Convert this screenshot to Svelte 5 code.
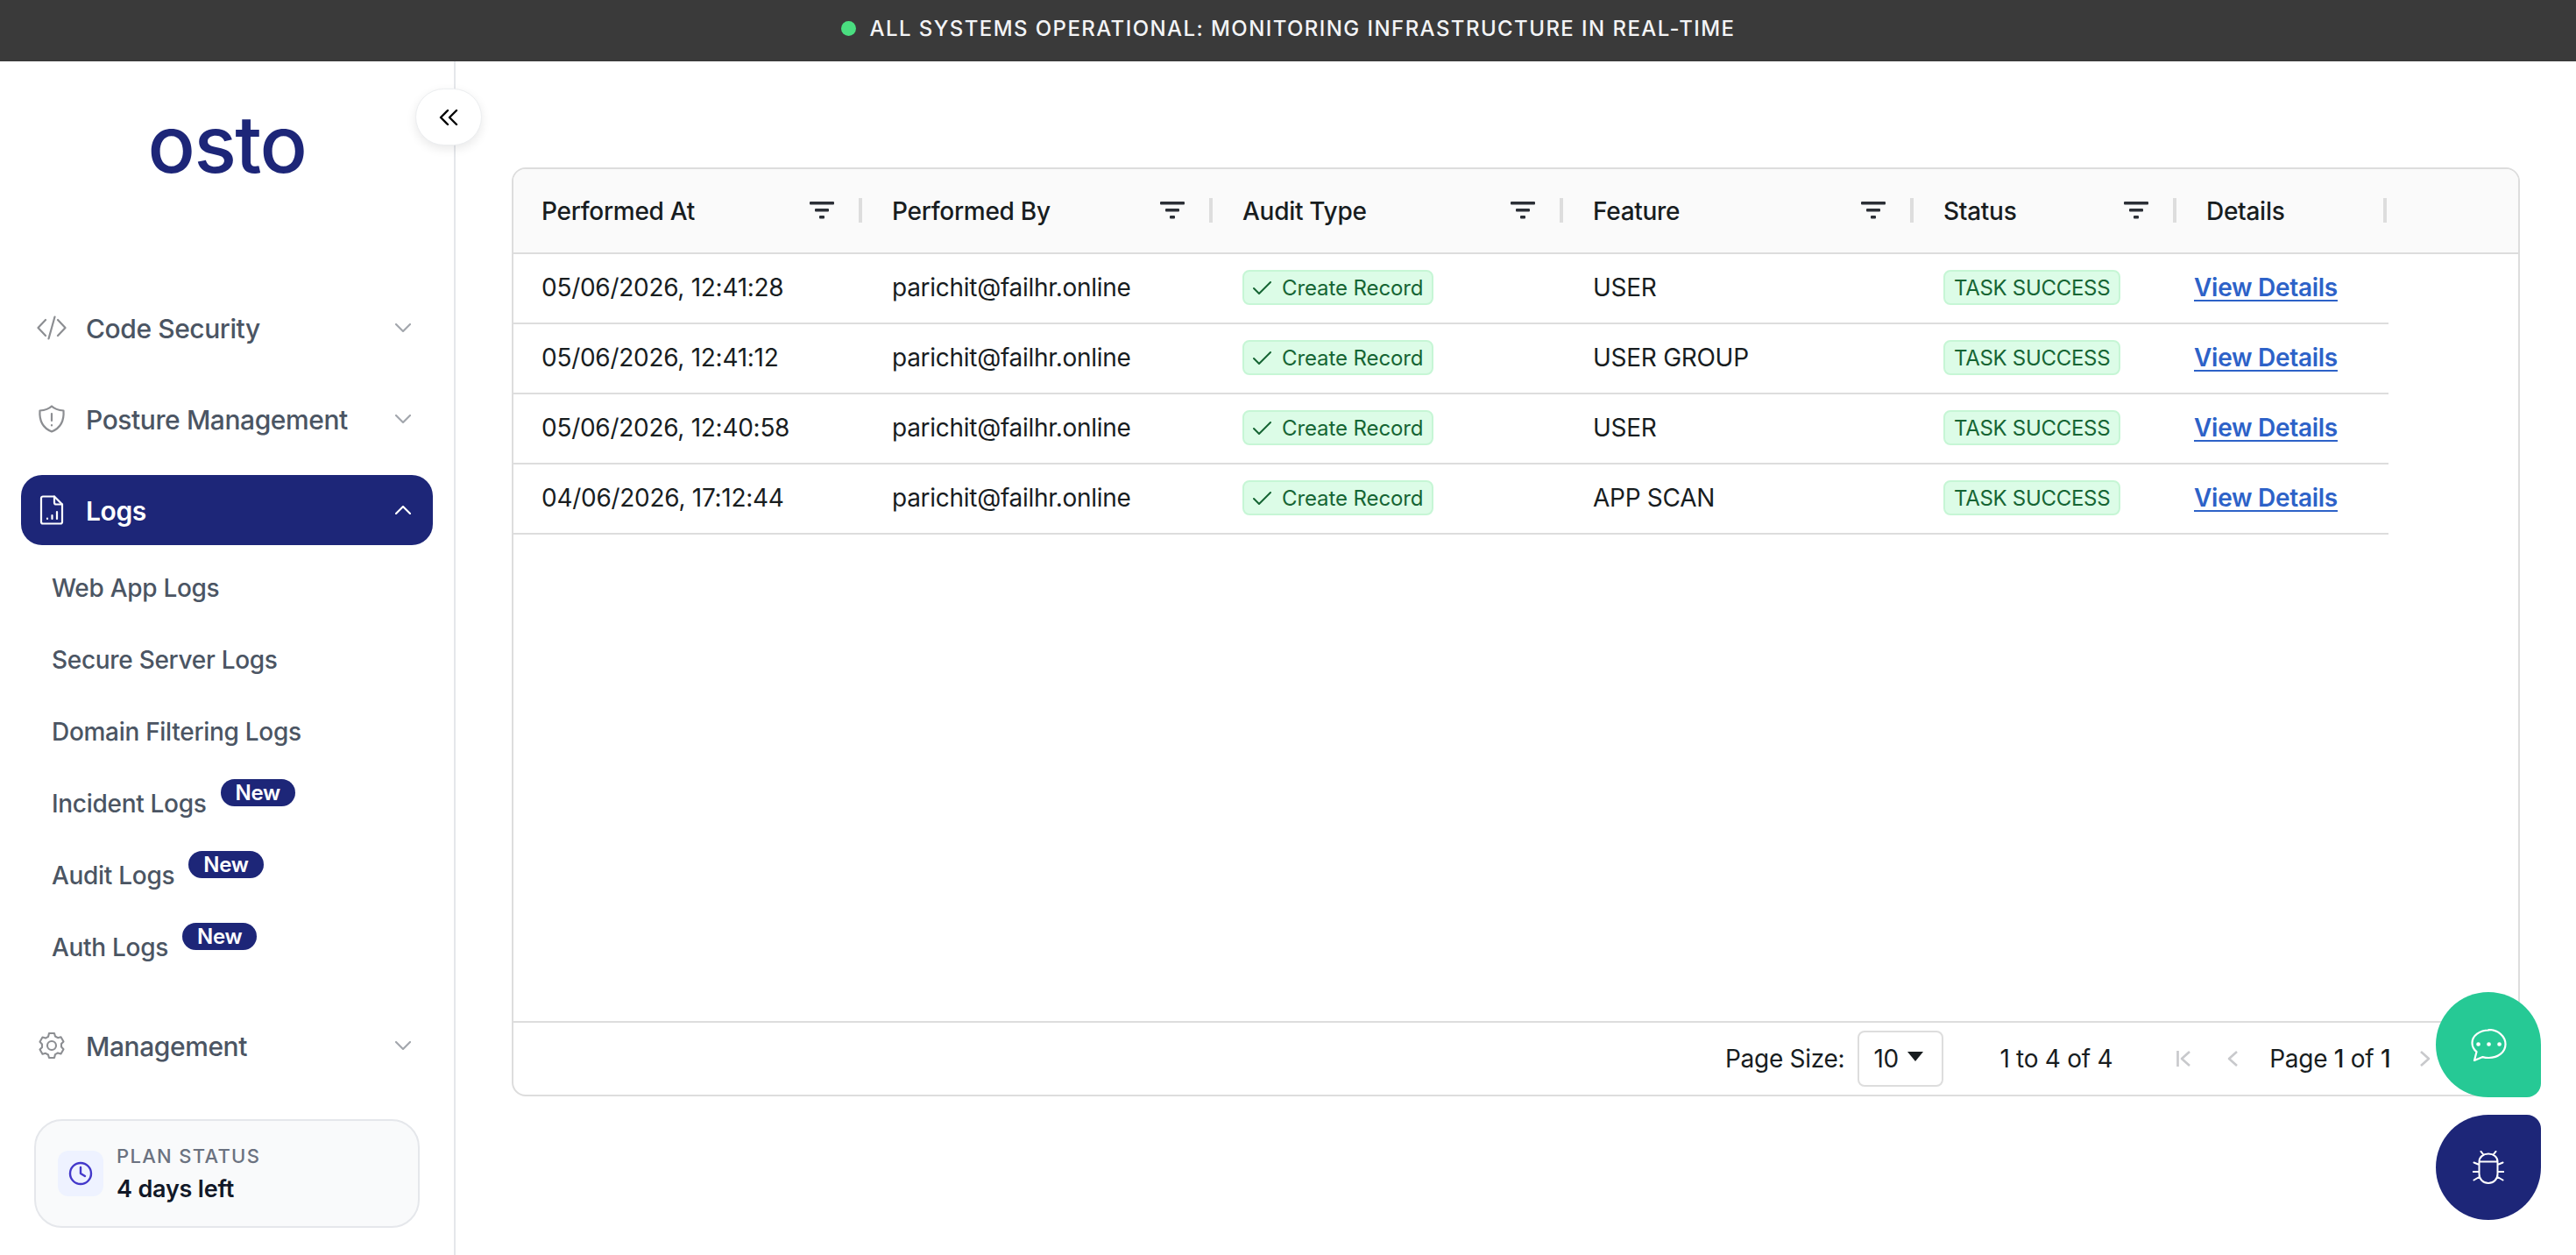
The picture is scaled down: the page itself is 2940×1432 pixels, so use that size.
<script>
  const cols = [
    { label: 'Performed At', w: 400, filter: true },
    { label: 'Performed By', w: 400, filter: true },
    { label: 'Audit Type', w: 400, filter: true },
    { label: 'Feature', w: 400, filter: true },
    { label: 'Status', w: 300, filter: true },
    { label: 'Details', w: 240, filter: false }
  ];
  const rows = [
    { at: '05/06/2026, 12:41:28', feature: 'USER' },
    { at: '05/06/2026, 12:41:12', feature: 'USER GROUP' },
    { at: '05/06/2026, 12:40:58', feature: 'USER' },
    { at: '04/06/2026, 17:12:44', feature: 'APP SCAN' }
  ];
  const subs = [
    { label: 'Web App Logs' },
    { label: 'Secure Server Logs' },
    { label: 'Domain Filtering Logs' },
    { label: 'Incident Logs', isNew: true },
    { label: 'Audit Logs', isNew: true },
    { label: 'Auth Logs', isNew: true }
  ];
</script>

<div class="page">
  <header class="topbar">
    <span class="dot"></span>
    <span class="toptext">ALL SYSTEMS OPERATIONAL: MONITORING INFRASTRUCTURE IN REAL-TIME</span>
  </header>

  <div class="body">
    <aside class="sidebar">
      <button class="collapse" aria-label="Collapse">
        <svg viewBox="0 0 24 24" width="24" height="24" fill="none" stroke="#000" stroke-width="2.400" stroke-linecap="round" stroke-linejoin="round"><path d="M11 4 3 12l8 8M21 4l-8 8 8 8"/></svg>
      </button>
      <div class="logo">osto</div>

      <nav class="nav">
        <div class="item">
          <svg class="ic" viewBox="0 0 34 34" fill="none" stroke="#8c8e92" stroke-width="2.200" stroke-linecap="round" stroke-linejoin="round"><path d="M10 8 1.500 17l8.500 9M24 8l8.500 9-8.500 9M20.500 4.500l-7 25"/></svg>
          <span>Code Security</span>
          <svg class="chev" viewBox="0 0 18 10" fill="none" stroke="#a3a7ad" stroke-width="2.200" stroke-linecap="round" stroke-linejoin="round"><path d="M1 1l8 8 8-8"/></svg>
        </div>
        <div class="item">
          <svg class="ic" viewBox="0 0 34 34" fill="none" stroke="#8c8e92" stroke-width="2.200" stroke-linecap="round" stroke-linejoin="round"><path d="M17 2.500c2.500 2.500 7 4.500 13.500 5 .8 11-2.500 19.500-13.500 24C6 27 2.700 18.500 3.500 7.500c6.500-.5 11-2.500 13.500-5Z"/><path d="M17 11v8M17 24v.5"/></svg>
          <span>Posture Management</span>
          <svg class="chev" viewBox="0 0 18 10" fill="none" stroke="#a3a7ad" stroke-width="2.200" stroke-linecap="round" stroke-linejoin="round"><path d="M1 1l8 8 8-8"/></svg>
        </div>
        <div class="item active">
          <svg class="ic" viewBox="0 0 34 34" fill="none" stroke="#fff" stroke-width="2.200" stroke-linecap="round" stroke-linejoin="round"><path d="M20 1.500H7a2 2 0 0 0-2 2v27a2 2 0 0 0 2 2h20a2 2 0 0 0 2-2V10.500Z"/><path d="M20 1.500v7a2 2 0 0 0 2 2h7M12 27v-.5M17.500 27v-4M23 27v-8"/></svg>
          <span>Logs</span>
          <svg class="chev" viewBox="0 0 18 10" fill="none" stroke="#fff" stroke-width="2.200" stroke-linecap="round" stroke-linejoin="round"><path d="M1 9l8-8 8 8"/></svg>
        </div>

        <ul class="subs">
          {#each subs as s}
            <li>
              <span class="sublabel">{s.label}</span>
              {#if s.isNew}<span class="new">New</span>{/if}
            </li>
          {/each}
        </ul>

        <div class="item mgmt">
          <svg class="ic" viewBox="0 0 34 34" fill="none" stroke="#8c8e92" stroke-width="2.100" stroke-linecap="round" stroke-linejoin="round"><path d="M14 3h6l1 3.500 3 1.700 3.500-1 3 5.200-2.500 2.600v3.600l2.500 2.600-3 5.200-3.500-1-3 1.700L20 31h-6l-1-3.500-3-1.700-3.500 1-3-5.200L6 19v-3.600L3.500 12.800l3-5.200 3.500 1 3-1.700Z"/><circle cx="17" cy="17" r="5"/></svg>
          <span>Management</span>
          <svg class="chev" viewBox="0 0 18 10" fill="none" stroke="#a3a7ad" stroke-width="2.200" stroke-linecap="round" stroke-linejoin="round"><path d="M1 1l8 8 8-8"/></svg>
        </div>
      </nav>

      <div class="plan">
        <div class="planicon">
          <svg viewBox="0 0 28 28" width="28" height="28" fill="none" stroke="#4338ca" stroke-width="2.400" stroke-linecap="round" stroke-linejoin="round"><circle cx="14" cy="14" r="12"/><path d="M14 7v7l5 3"/></svg>
        </div>
        <div>
          <div class="plantop">PLAN STATUS</div>
          <div class="planval">4 days left</div>
        </div>
      </div>
    </aside>

    <main class="main">
      <section class="grid">
        <div class="head">
          {#each cols as c}
            <div class="hcell" style="width:{c.w}px">
              <span>{c.label}</span>
              {#if c.filter}
                <svg class="filter" viewBox="0 0 28 20" fill="#2b2f36"><rect x="0" y="0" width="28" height="3.500" rx="1"/><rect x="6" y="8" width="16" height="3.500" rx="1"/><rect x="11" y="16" width="6" height="3.500" rx="1"/></svg>
              {/if}
              <i class="handle"></i>
            </div>
          {/each}
        </div>

        <div class="rows">
          {#each rows as r}
            <div class="row">
              <div class="cell" style="width:400px">{r.at}</div>
              <div class="cell" style="width:400px">parichit@failhr.online</div>
              <div class="cell" style="width:400px">
                <span class="badge">
                  <svg viewBox="0 0 21 15" width="21" height="15" fill="none" stroke="#166534" stroke-width="2" stroke-linecap="round" stroke-linejoin="round"><path d="M1 8l6 6L20 1"/></svg>
                  Create Record
                </span>
              </div>
              <div class="cell" style="width:400px">{r.feature}</div>
              <div class="cell" style="width:300px"><span class="badge task">TASK SUCCESS</span></div>
              <div class="cell link" style="width:240px"><a href="#top">View Details</a></div>
            </div>
          {/each}
        </div>

        <footer class="pager">
          <span>Page Size:</span>
          <div class="select"><span>10</span><i class="tri"></i></div>
          <span class="count">1 to 4 of 4</span>
          <svg class="pg first" viewBox="0 0 16 18" fill="none" stroke="#c8c9cc" stroke-width="2.600" stroke-linejoin="round"><path d="M1.500 0v18M15 1 6 9l9 8"/></svg>
          <svg class="pg prev" viewBox="0 0 12 18" fill="none" stroke="#c8c9cc" stroke-width="2.600" stroke-linejoin="round"><path d="M11 1 2 9l9 8"/></svg>
          <span class="pagetext">Page <b>1</b> of <b>1</b></span>
          <svg class="pg next" viewBox="0 0 12 18" fill="none" stroke="#c8c9cc" stroke-width="2.600" stroke-linejoin="round"><path d="M1 1l9 8-9 8"/></svg>
        </footer>
      </section>
    </main>
  </div>

  <button class="fab chat" aria-label="Chat">
    <svg viewBox="0 0 41 37" width="41" height="37" fill="none" stroke="#fff" stroke-width="2.200" stroke-linecap="round" stroke-linejoin="round"><path d="M20.500 1.500C10 1.500 1.500 7.700 1.500 16c0 4.200 2 7.600 5 10.200L4 36l9.500-3.900c2.200.6 4.500.9 7 .9 10.500 0 19-6.500 19-15.500s-8.500-16.500-19-16.500Z"/><path d="M8.500 17.500h.1M20.500 17.500h.1M32.500 17.500h.1" stroke-width="4.600"/></svg>
  </button>
  <button class="fab bug" aria-label="Report a bug">
    <svg viewBox="0 0 36 38" width="36" height="38" fill="none" stroke="#fff" stroke-width="2" stroke-linecap="round" stroke-linejoin="round"><path d="M7.500 12.500C7.500 7.500 12 3.500 18 3.500s10.500 4 10.500 8.900ZM7.500 12.500v14c0 6 4.500 10.500 10.500 10.500s10.500-4.500 10.500-10.500v-14M12 4 9.500.8M24 4 26.500.8M7.500 16 1.500 13.500M28.500 16l6-2.500M7.500 24H.8M28.500 24h6.700M7.500 30l-6 3.500M28.500 30l6 3.500"/></svg>
  </button>
</div>

<style>
  :global(body) { margin: 0; background: #fff; }
  .page {
    position: relative;
    height: 1432px;
    overflow: hidden;
    display: flex;
    flex-direction: column;
    font-family: Inter, "Liberation Sans", sans-serif;
    font-size: 28px;
    letter-spacing: -0.28px;
    color: #181d1f;
  }
  .topbar {
    height: 70px;
    padding-bottom: 6px;
    box-sizing: border-box;
    flex: none;
    background: #3a3a3a;
    display: flex;
    align-items: center;
    justify-content: center;
    gap: 16px;
  }
  .dot { width: 17px; height: 17px; border-radius: 50%; background: #4ade80; }
  .toptext { color: #f3f4f6; font-size: 24px; font-weight: 500; letter-spacing: 1.420px; }

  .body { flex: 1; display: flex; min-height: 0; }
  .sidebar {
    position: relative;
    width: 520px;
    box-sizing: border-box;
    flex: none;
    border-right: 2px solid #e5e7eb;
    display: flex;
    flex-direction: column;
    padding: 0 24px;
  }
  .collapse {
    position: absolute;
    left: 474px;
    top: 31px;
    width: 76px;
    height: 65px;
    border-radius: 33px;
    border: 1px solid #eceef0;
    background: #fff;
    box-shadow: 0 4px 12px rgba(0, 0, 0, .09);
    display: flex;
    align-items: center;
    justify-content: center;
    padding: 0;
    z-index: 2;
  }
  .logo {
    height: 264px;
    box-sizing: border-box;
    padding-top: 35px;
    text-align: center;
    color: #1d2678;
    font-size: 90px;
    line-height: 120px;
    font-weight: 500;
    letter-spacing: -1.500px;
  }
  .nav { display: flex; flex-direction: column; }
  .item {
    height: 80px;
    margin-bottom: 24px;
    border-radius: 24px;
    display: flex;
    align-items: center;
    color: #4b5563;
    font-size: 30px;
    font-weight: 500;
    letter-spacing: -0.42px;
    padding-left: 18px;
    padding-right: 25px;
  }
  .item span { flex: 1; margin-left: 22px; margin-top: 2px; }
  .item.active { background: #1d2678; color: #fff; font-weight: 600; }
  .ic { width: 34px; height: 34px; flex: none; }
  .chev { width: 18px; height: 10px; flex: none; }
  .subs { list-style: none; padding: 0 0 0 35px; margin: -16px 0 0; }
  .subs li { height: 82px; display: flex; align-items: center; gap: 16px; color: #4b5563; font-size: 28px; font-weight: 500; letter-spacing: -0.3px; }
  .new {
    background: #1d2678;
    color: #fff;
    font-size: 24px;
    line-height: 31px;
    font-weight: 600;
    padding: 0 17px;
    border-radius: 16px;
    margin-top: -26px;
  }
  .mgmt { margin-top: 31px; margin-bottom: 0; }
  .plan {
    position: absolute;
    left: 39px;
    top: 1207px;
    width: 440px;
    height: 124px;
    box-sizing: border-box;
    border: 2px solid #e5e7eb;
    border-radius: 32px;
    background: #f9fafb;
    display: flex;
    align-items: center;
    gap: 15px;
    padding-left: 25px;
  }
  .planicon {
    width: 52px;
    height: 52px;
    border-radius: 12px;
    background: #eef2ff;
    display: flex;
    align-items: center;
    justify-content: center;
  }
  .plantop { font-size: 22px; font-weight: 500; letter-spacing: 1.300px; color: #6b7280; line-height: 30px; margin-top: 2px; }
  .planval { font-size: 27px; font-weight: 600; color: #111827; line-height: 40px; margin-top: 3px; letter-spacing: -0.2px; }

  .main { flex: 1; min-width: 0; padding: 121px 64px 0; box-sizing: border-box; }
  .grid {
    height: 1060px;
    box-sizing: border-box;
    border: 2px solid #dddddd;
    border-radius: 16px;
    overflow: hidden;
    display: flex;
    flex-direction: column;
  }
  .head { height: 97px; flex: none; box-sizing: border-box; background: #fafafa; border-bottom: 2px solid #dddddd; display: flex; }
  .hcell { position: relative; box-sizing: border-box; padding: 1px 32px 0; display: flex; align-items: center; justify-content: space-between; font-weight: 500; }
  .filter { width: 28px; height: 20px; position: absolute; right: 34px; top: 37px; }
  .handle { position: absolute; right: 2px; top: 33px; width: 4px; height: 28px; background: #dddddd; }
  .rows { flex: 1; min-height: 0; }
  .row { width: 2140px; height: 80px; box-sizing: border-box; border-bottom: 2px solid #dddddd; display: flex; }
  .cell { box-sizing: border-box; padding: 0 32px 2px; display: flex; align-items: center; }
  .link { padding-left: 18px; }
  .link a { color: #2d62c8; font-weight: 600; text-decoration: underline; text-underline-offset: 4px; }
  .badge {
    height: 40px;
    box-sizing: border-box;
    padding: 0 10px;
    display: inline-flex;
    align-items: center;
    gap: 12px;
    background: #dcfce7;
    border: 2px solid #c6f6d5;
    border-radius: 8px;
    color: #166534;
    font-size: 24px;
    font-weight: 400;
    letter-spacing: -0.1px;
    white-space: nowrap;
  }
  .task { letter-spacing: -0.3px; }
  .pager {
    height: 84px;
    flex: none;
    box-sizing: border-box;
    border-top: 2px solid #dddddd;
    display: flex;
    align-items: center;
    padding-left: 1383px;
  }
  .select {
    margin-left: 15px;
    width: 98px;
    height: 64px;
    box-sizing: border-box;
    border: 2px solid #dddddd;
    border-radius: 8px;
    display: flex;
    align-items: center;
    padding-left: 16px;
    gap: 10px;
  }
  .tri { width: 0; height: 0; border-left: 9px solid transparent; border-right: 9px solid transparent; border-top: 11px solid #181d1f; margin-top: -6px; }
  .count { margin-left: 64px; }
  .pg { height: 18px; flex: none; }
  .first { width: 16px; margin-left: 73px; }
  .prev { width: 12px; margin-left: 42px; }
  .pagetext { margin-left: 36px; }
  .pagetext b { font-weight: 500; }
  .next { width: 12px; margin-left: 34px; }

  .fab {
    position: absolute;
    left: 2780px;
    width: 120px;
    height: 120px;
    border: 0;
    padding: 0;
    display: flex;
    align-items: center;
    justify-content: center;
    z-index: 3;
  }
  .chat { top: 1132px; background: #26c995; border-radius: 60px 60px 16px 60px; }
  .bug { top: 1272px; background: #1d2678; border-radius: 60px 16px 60px 60px; }
</style>
